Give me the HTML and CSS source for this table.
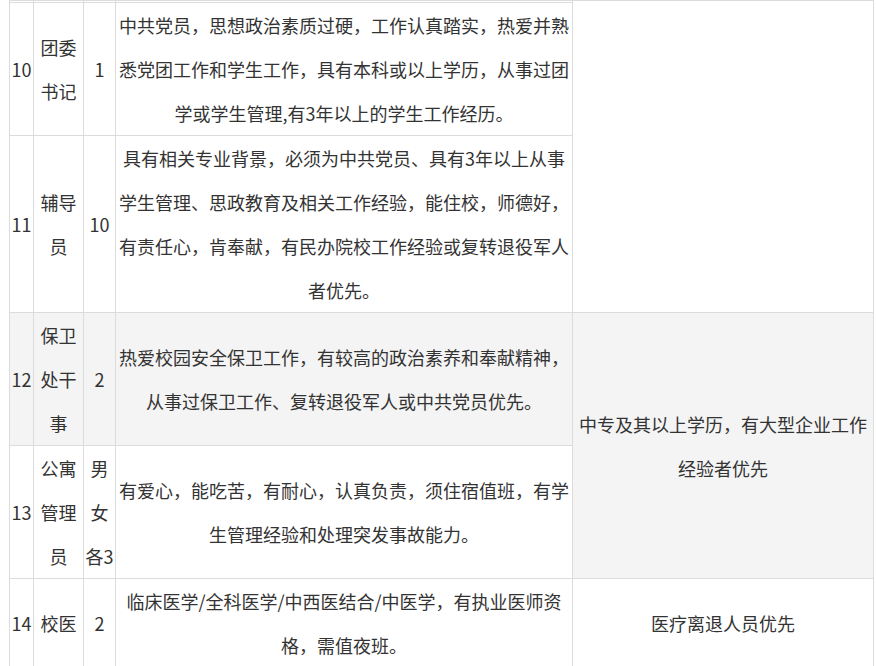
FILE: index.html
```html
<!DOCTYPE html>
<html lang="zh-CN">
<head>
<meta charset="utf-8">
<link rel="stylesheet" href="styles.css">
</head>
<body>
<div class="wrap">
<table class="jobs">
<colgroup>
<col class="c-no"><col class="c-title"><col class="c-count"><col class="c-req"><col class="c-note">
</colgroup>
<tbody>
<tr class="stub"><td></td><td></td><td></td><td></td><td rowspan="3"></td></tr>
<tr>
<td>10</td><td>团委书记</td><td>1</td>
<td>中共党员，思想政治素质过硬，工作认真踏实，热爱并熟悉党团工作和学生工作，具有本科或以上学历，从事过团学或学生管理,有3年以上的学生工作经历。</td>
</tr>
<tr>
<td>11</td><td>辅导员</td><td>10</td>
<td>具有相关专业背景，必须为中共党员、具有3年以上从事学生管理、思政教育及相关工作经验，能住校，师德好，有责任心，肯奉献，有民办院校工作经验或复转退役军人者优先。</td>
</tr>
<tr class="shade">
<td>12</td><td>保卫处干事</td><td>2</td>
<td>热爱校园安全保卫工作，有较高的政治素养和奉献精神，从事过保卫工作、复转退役军人或中共党员优先。</td>
<td rowspan="2">中专及其以上学历，有大型企业工作经验者优先</td>
</tr>
<tr>
<td>13</td><td>公寓管理员</td><td>男女各3</td>
<td>有爱心，能吃苦，有耐心，认真负责，须住宿值班，有学生管理经验和处理突发事故能力。</td>
</tr>
<tr>
<td>14</td><td>校医</td><td>2</td>
<td>临床医学/全科医学/中西医结合/中医学，有执业医师资格，需值夜班。</td>
<td>医疗离退人员优先</td>
</tr>
</tbody>
</table>
</div>
</body>
</html>
```
FILE: styles.css
```css
html, body {
  margin: 0;
  padding: 0;
  background: #fff;
}
.wrap {
  padding-left: 9px;
  padding-top: 0;
}
.jobs {
  border-collapse: collapse;
  table-layout: fixed;
  width: 864px;
  font-family: "Microsoft YaHei", "Noto Sans CJK SC", sans-serif;
  font-size: 18px;
  line-height: 44px;
  color: #333;
}
.c-no { width: 24px; }
.c-title { width: 50px; }
.c-count { width: 32px; }
.c-req { width: 457px; }
.c-note { width: 301px; }
.jobs td {
  border: 1px solid #dcdcdc;
  padding: 0;
  text-align: center;
  vertical-align: middle;
  word-break: break-all;
}
.jobs tr.stub td {
  height: 1px;
  line-height: 0;
  font-size: 0;
}
.jobs tr.shade td {
  background: #f4f4f4;
}
```
